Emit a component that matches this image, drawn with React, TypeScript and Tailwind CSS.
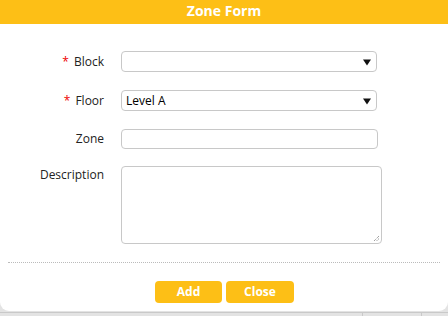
const font = { fontFamily: '"Open Sans", "DejaVu Sans", sans-serif' };

function Label({ text, required }: { text: string; required?: boolean }) {
  return (
    <div className="w-[104px] shrink-0 text-right text-[12px] text-[#222] leading-[16px]">
      {required && <span className="text-[#e00] mr-[5px]">*</span>}
      {text}
    </div>
  );
}

function Select({ value }: { value?: string }) {
  return (
    <div className="ml-[17px] w-[256px] h-[21px] border border-[#c8c8c8] rounded-[4px] flex items-center justify-between pl-[4px] pr-[5px] text-[12px] text-black">
      <span>{value}</span>
      <svg width="8" height="8" viewBox="0 0 8 8">
        <path d="M0 1.5 H8 L4 7.5 Z" fill="#111" />
      </svg>
    </div>
  );
}

export default function App() {
  return (
    <div className="w-[448px] h-[316px] bg-[#e3e3e3] relative overflow-hidden" style={font}>
      <div className="h-[311px] bg-white rounded-b-[9px] flex flex-col">
        <div className="h-[24px] bg-[#fdbf16] flex items-center justify-center text-white font-bold text-[14px] pb-[4px]">
          Zone Form
        </div>
        <div className="flex flex-col pt-[27px]">
          <div className="flex items-center h-[21px]">
            <Label text="Block" required />
            <Select />
          </div>
          <div className="flex items-center h-[21px] mt-[18px]">
            <Label text="Floor" required />
            <Select value="Level A" />
          </div>
          <div className="flex items-center h-[20px] mt-[18px]">
            <Label text="Zone" />
            <div className="ml-[17px] w-[257px] h-[20px] border border-[#c8c8c8] rounded-[4px]" />
          </div>
          <div className="flex items-start mt-[17px]">
            <div className="pt-[1px]">
              <Label text="Description" />
            </div>
            <div className="ml-[17px] w-[261px] h-[78px] border border-[#c8c8c8] rounded-[4px] relative">
              <svg className="absolute right-[1px] bottom-[1px]" width="7" height="7" viewBox="0 0 7 7">
                <path d="M6 1 L1 6 M6 3.5 L3.5 6" stroke="#777" strokeWidth="1" strokeDasharray="1 1" />
              </svg>
            </div>
          </div>
        </div>
        <div className="mx-[8px] mt-[18px] border-t border-dotted border-[#bbb]" />
        <div className="flex justify-center gap-[4px] mt-[18px] ml-[1px]">
          <button className="w-[67px] h-[22px] bg-[#fdbf16] rounded-[4px] text-white font-bold text-[12px]">Add</button>
          <button className="w-[68px] h-[22px] bg-[#fdbf16] rounded-[4px] text-white font-bold text-[12px]">Close</button>
        </div>
      </div>
      <div className="absolute left-0 right-0 top-[312px] border-t border-[#c9c9c9]" />
      <div className="absolute top-[312px] bottom-0 left-[362px] border-l border-[#c9c9c9]" />
      <div className="absolute top-[312px] bottom-0 left-[421px] border-l border-[#c9c9c9]" />
    </div>
  );
}
